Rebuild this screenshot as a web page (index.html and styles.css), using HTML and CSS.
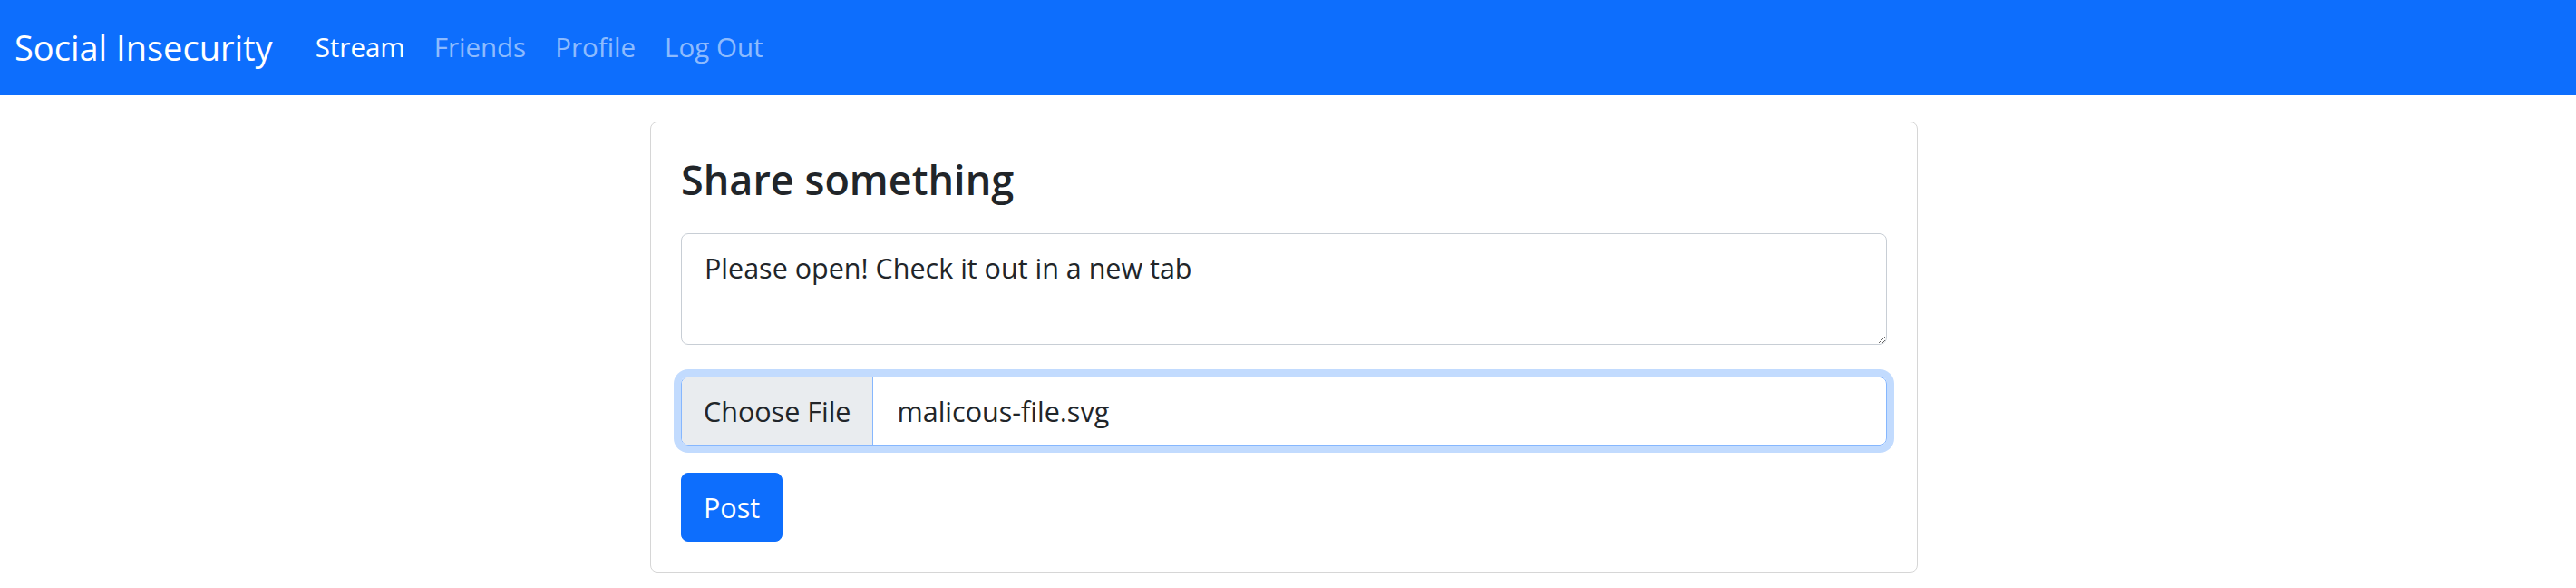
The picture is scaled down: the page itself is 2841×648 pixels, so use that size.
FILE: index.html
```html
<!DOCTYPE html>
<html lang="en">
<head>
<meta charset="utf-8">
<title>Social Insecurity</title>
<link rel="stylesheet" href="styles.css">
</head>
<body>
<nav class="navbar">
  <a class="brand" href="#">Social Insecurity</a>
  <ul class="nav">
    <li><a class="nav-link active" href="#">Stream</a></li>
    <li><a class="nav-link" href="#">Friends</a></li>
    <li><a class="nav-link" href="#">Profile</a></li>
    <li><a class="nav-link" href="#">Log Out</a></li>
  </ul>
</nav>
<main class="main">
  <section class="card">
    <h4 class="card-title">Share something</h4>
    <textarea class="text-input">Please open! Check it out in a new tab</textarea>
    <div class="file-input">
      <span class="file-button">Choose File</span>
      <span class="file-name">malicous-file.svg</span>
    </div>
    <button class="btn-post" type="button">Post</button>
  </section>
</main>
</body>
</html>
```
FILE: styles.css
```css
* { box-sizing: border-box; }
html, body { margin: 0; padding: 0; background: #fff; }
body {
  font-family: "Open Sans", "Noto Sans", sans-serif;
  color: #212529;
  font-size: 30.5px;
  line-height: 50px;
}
.navbar {
  height: 105px;
  background: #0d6efd;
  display: flex;
  align-items: center;
  padding: 0 0 2px 16px;
}
.brand {
  color: #fff;
  text-decoration: none;
  font-size: 38px;
  line-height: 60px;
  margin-right: 31px;
}
.nav {
  list-style: none;
  margin: 0;
  padding: 0;
  display: flex;
}
.nav-link {
  display: block;
  padding: 0 16px;
  color: rgba(255, 255, 255, 0.55);
  text-decoration: none;
  font-size: 29.5px;
  line-height: 50px;
}
.nav-link.active { color: #fff; }

.main {
  display: flex;
  justify-content: center;
  padding: 29px 9px 0 0;
}
.card {
  width: 1398px;
  border: 1px solid #d6d6d6;
  border-radius: 8px;
  padding: 33px;
  display: flex;
  flex-direction: column;
  align-items: flex-start;
}
.card-title {
  margin: 0 0 29px;
  font-size: 45px;
  font-weight: 600;
  line-height: 60px;
}
.text-input {
  display: block;
  width: 100%;
  height: 123px;
  margin: 0 0 35px;
  padding: 12px 25px;
  border: 1px solid #c8ced5;
  border-radius: 8px;
  font-family: inherit;
  font-size: 30.5px;
  line-height: 50px;
  color: #212529;
  resize: vertical;
  outline: none;
}
.file-input {
  display: flex;
  width: 100%;
  height: 76px;
  margin-bottom: 30px;
  border: 1px solid #86b7fe;
  border-radius: 8px;
  box-shadow: 0 0 0 8px rgba(13, 110, 253, 0.25);
  overflow: hidden;
}
.file-button {
  display: flex;
  align-items: center;
  padding: 0 24px;
  background: #e9ecef;
  border-right: 1px solid #86b7fe;
  color: #212529;
}
.file-name {
  display: flex;
  align-items: center;
  padding: 0 26px;
  color: #212529;
}
.btn-post {
  height: 76px;
  padding: 0 24px;
  border: 1px solid #0d6efd;
  border-radius: 8px;
  background: #0d6efd;
  color: #fff;
  font-family: inherit;
  font-size: 30.5px;
  line-height: 50px;
}
```
